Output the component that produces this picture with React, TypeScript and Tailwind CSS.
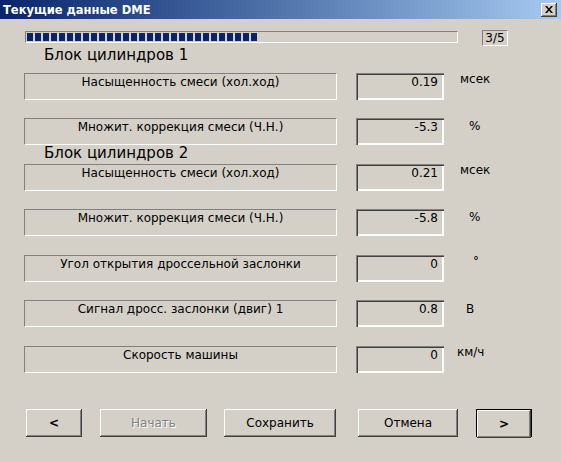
import { Fragment } from "react";

type Field = {
  label: string;
  value: string;
  unit: string;
  rowCls: string;
  unitCls: string;
  header?: string;
};

const fields: Field[] = [
  { header: "Блок цилиндров 1", label: "Насыщенность смеси (хол.ход)", value: "0.19", unit: "мсек", rowCls: "mt-[9px]", unitCls: "ml-[16px] -mt-[1px]" },
  { label: "Множит. коррекция смеси (Ч.Н.)", value: "-5.3", unit: "%", rowCls: "mt-[18px]", unitCls: "ml-[25px] mt-[1px]" },
  { header: "Блок цилиндров 2", label: "Насыщенность смеси (хол.ход)", value: "0.21", unit: "мсек", rowCls: "mt-[2px]", unitCls: "ml-[16px] -mt-[1px]" },
  { label: "Множит. коррекция смеси (Ч.Н.)", value: "-5.8", unit: "%", rowCls: "mt-[18px]", unitCls: "ml-[25px] mt-[1px]" },
  { label: "Угол открытия дроссельной заслонки", value: "0", unit: "°", rowCls: "mt-[19px]", unitCls: "ml-[29px] -mt-[1px]" },
  { label: "Сигнал дросс. заслонки (двиг) 1", value: "0.8", unit: "В", rowCls: "mt-[18px]", unitCls: "ml-[22px] mt-[2px]" },
  { label: "Скорость машины", value: "0", unit: "км/ч", rowCls: "mt-[19px]", unitCls: "ml-[13px] -mt-[1px]" },
];

const btn =
  "h-[28px] flex items-center justify-center bg-[#d4d0c8] shadow-[inset_-1px_-1px_0_#404040,inset_1px_1px_0_#fff,inset_-2px_-2px_0_#808080]";

function Row({ f }: { f: Field }) {
  return (
    <div className={`flex items-start pl-[24px] ${f.rowCls}`}>
      <div className="w-[313px] h-[27px] border border-t-[#808080] border-l-[#808080] border-b-white border-r-white pt-[1px] text-center leading-[14px]">
        {f.label}
      </div>
      <div className="ml-[19px] w-[88px] h-[27px] pt-[2px] pr-[6px] text-right leading-[14px] shadow-[inset_1px_1px_0_#808080,inset_2px_2px_0_#404040,inset_-1px_-1px_0_#fff,inset_-2px_-2px_0_#fff]">
        {f.value}
      </div>
      <span className={`leading-[14px] ${f.unitCls}`}>{f.unit}</span>
    </div>
  );
}

export default function App() {
  return (
    <div className="w-[561px] h-[462px] bg-[#d4d0c8] text-[12px] text-black font-['DejaVu_Sans','Liberation_Sans',sans-serif] overflow-hidden">
      {/* caption */}
      <div className="h-[19px] flex items-center justify-between pl-[3px] pr-[4px] bg-linear-to-r from-[#0a246a] to-[#a6caf0]">
        <span className="text-white font-bold text-[11.5px] leading-[14px]">Текущие данные DME</span>
        <div className="w-[16px] h-[14px] flex items-center justify-center bg-[#d4d0c8] shadow-[inset_-1px_-1px_0_#404040,inset_1px_1px_0_#fff,inset_-2px_-2px_0_#808080]">
          <svg width="8" height="7" viewBox="0 0 8 7">
            <path d="M0 0h2l2 2.5L6 0h2L5 3.5 8 7H6L4 4.5 2 7H0l3-3.5z" fill="#000" />
          </svg>
        </div>
      </div>

      {/* progress */}
      <div className="mt-[11px] flex items-start pl-[25px]">
        <div className="mt-[1px] w-[433px] h-[12px] border border-t-[#808080] border-l-[#808080] border-b-white border-r-white flex gap-[2px] py-[1px] pl-[1px]">
          {Array.from({ length: 29 }).map((_, i) => (
            <div key={i} className="w-[6px] h-[8px] bg-[#0a246a]" />
          ))}
        </div>
        <div className="ml-[24px] w-[26px] h-[16px] border border-t-[#808080] border-l-[#808080] border-b-white border-r-white text-center leading-[14px]">
          3/5
        </div>
      </div>

      {fields.map((f, i) => (
        <Fragment key={i}>
          {f.header && (
            <div className={`pl-[44px] text-[15px] leading-[17px] ${i === 0 ? "mt-[1px]" : ""}`}>{f.header}</div>
          )}
          <Row f={f} />
        </Fragment>
      ))}

      {/* buttons */}
      <div className="mt-[36px] flex items-start pl-[26px]">
        <button className={`${btn} w-[56px] font-bold`}>&lt;</button>
        <button className={`${btn} ml-[18px] w-[107px] text-[#808080] [text-shadow:1px_1px_0_#fff]`}>Начать</button>
        <button className={`${btn} ml-[17px] w-[112px]`}>Сохранить</button>
        <button className={`${btn} ml-[22px] w-[100px]`}>Отмена</button>
        <button className="ml-[18px] w-[56px] h-[28px] border border-black">
          <div className={`${btn} h-[26px] font-bold`}>&gt;</div>
        </button>
      </div>
    </div>
  );
}
